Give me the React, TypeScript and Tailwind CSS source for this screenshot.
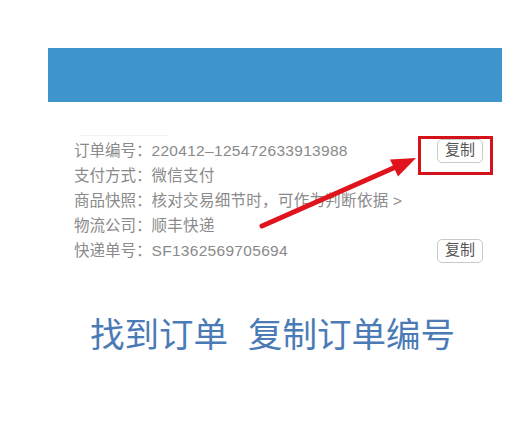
export default function App() {
  const rows = [
    { label: "订单编号：", value: "220412–125472633913988", copy: true },
    { label: "支付方式：", value: "微信支付" },
    { label: "商品快照：", value: "核对交易细节时，可作为判断依据 >" },
    { label: "物流公司：", value: "顺丰快递" },
    { label: "快递单号：", value: "SF1362569705694", copy: true },
  ];

  return (
    <div className="relative w-[521px] h-[423px] overflow-hidden bg-white font-['Liberation_Sans','Noto_Sans_CJK_SC',sans-serif]">
      {/* blue banner */}
      <div className="ml-[48px] mr-[19px] mt-[48px] h-[54px] bg-[#3d95cc]" />

      <div className="ml-[80px] mt-[33px] h-px w-[88px] bg-[#f1f1f1]" />

      {/* order info */}
      <div className="mt-[2px] pl-[74px] pr-[38px] text-[15.5px] text-[#8a8a8a]">
        {rows.map((row) => (
          <div key={row.label} className="flex h-[25px] items-center justify-between">
            <div className="flex">
              <span>{row.label}</span>
              <span className="tracking-[0.3px]">{row.value}</span>
            </div>
            {row.copy && (
              <button className="flex h-[24px] w-[46px] items-center justify-center rounded-[5px] border border-[#c9c9c9] bg-white text-[15px] text-[#555]">
                复制
              </button>
            )}
          </div>
        ))}
      </div>

      <div className="mt-[49px] pl-[90px] text-[34.5px] leading-[40px] text-[#4a7bb6] font-['Noto_Sans_CJK_SC',sans-serif]">
        <span>找到订单</span>
        <span className="ml-[20px]">复制订单编号</span>
      </div>

      {/* annotation: red box + arrow */}
      <div className="absolute left-[418px] top-[136px] h-[39px] w-[75px] border-[3px] border-[#d5121a]" />
      <svg className="pointer-events-none absolute left-0 top-0" width="521" height="423">
        <line x1="262" y1="226" x2="398" y2="166" stroke="#e0141c" strokeWidth="5" strokeLinecap="round" />
        <polygon points="416,158 390,159.5 398,176.5" fill="#e0141c" />
      </svg>
    </div>
  );
}
